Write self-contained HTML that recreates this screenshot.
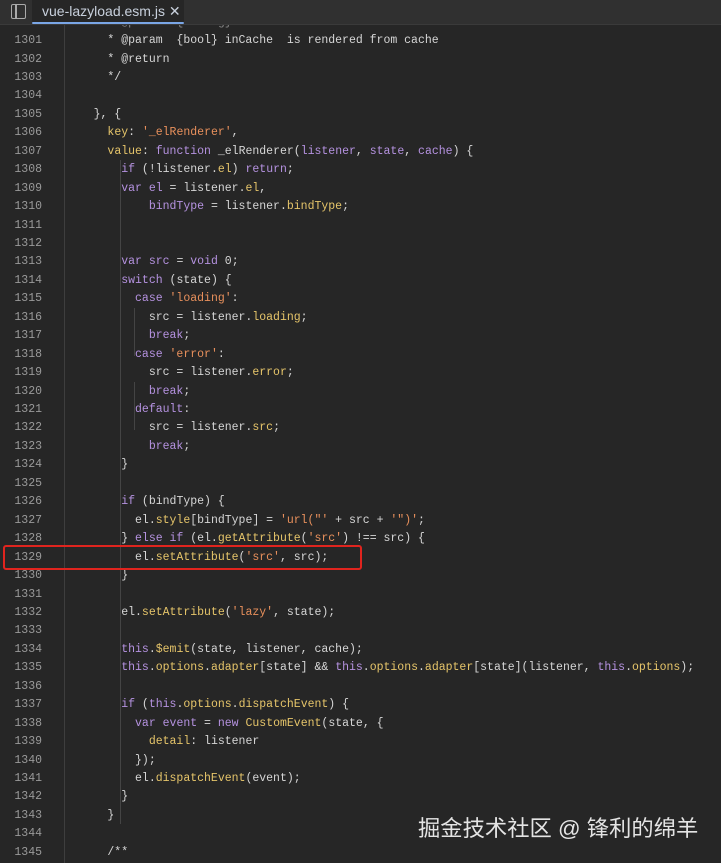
<!DOCTYPE html>
<html><head><meta charset="utf-8"><style>
body{margin:0;width:721px;height:863px;background:#262626;overflow:hidden;position:relative;font-family:"Liberation Mono",monospace}
.tabbar{position:absolute;left:0;top:0;width:721px;height:24px;background:#303030;border-bottom:1px solid #3a3a3a;z-index:5}
.tab{position:absolute;left:32px;top:0;height:24px;width:152px;background:#262626}
.tab span{position:absolute;left:10px;top:3px;font:14px "Liberation Sans",sans-serif;color:#c8d0dc;white-space:nowrap}
.tab i{position:absolute;left:0;right:0;bottom:0;height:2px;background:#7aa6e6;border-radius:2px}
.gut{position:absolute;left:0;top:24px;width:64px;height:839px;border-right:1px solid #3e3e3e}
.ln{position:absolute;left:0;width:42px;text-align:right;font-size:11.5px;color:#9a9a9a;height:18px;line-height:18px}
.cd{position:absolute;left:66px;font-size:11.5px;color:#d6d6d6;white-space:pre;height:18px;line-height:18px}
.k{color:#b592e0}.s{color:#e8905c}.p{color:#e6c56a}
.g{position:absolute;width:1px;background:#444}
.box{position:absolute;left:3px;top:545px;width:355px;height:21px;border:2px solid #e0241e;border-radius:3px}
.wm{position:absolute;left:418px;top:811px;font:22.3px "Liberation Sans","Noto Sans CJK SC",sans-serif;color:#e4e4e4;white-space:nowrap}
</style></head><body>
<div class="tabbar"><div style="position:absolute;left:11px;top:4px;width:13px;height:13px;border:1.5px solid #aaa;border-radius:2px"><div style="position:absolute;left:3px;top:0;width:1.5px;height:13px;background:#aaa"></div></div>
<div class="tab"><span>vue-lazyload.esm.js ✕</span><i></i></div></div>
<div class="gut"></div>
<div class="g" style="left:120px;top:160px;height:664px"></div>
<div class="g" style="left:134px;top:308px;height:48px"></div>
<div class="g" style="left:134px;top:382px;height:48px"></div>
<div id="c"></div>
<div class="box"></div>
<div class="wm">掘金技术社区 @ 锋利的绵羊</div>
<script>
var L=[
['      * @param  {bool} inCache  is rendered from cache'],
['      * @return'],
['      */'],
[''],
['    }, {'],
['      <span class="p">key</span>: <span class="s">\'_elRenderer\'</span>,'],
['      <span class="p">value</span>: <span class="k">function</span> _elRenderer(<span class="k">listener</span>, <span class="k">state</span>, <span class="k">cache</span>) {'],
['        <span class="k">if</span> (!listener.<span class="p">el</span>) <span class="k">return</span>;'],
['        <span class="k">var</span> <span class="k">el</span> = listener.<span class="p">el</span>,'],
['            <span class="k">bindType</span> = listener.<span class="p">bindType</span>;'],
[''],[''],
['        <span class="k">var</span> <span class="k">src</span> = <span class="k">void</span> 0;'],
['        <span class="k">switch</span> (state) {'],
['          <span class="k">case</span> <span class="s">\'loading\'</span>:'],
['            src = listener.<span class="p">loading</span>;'],
['            <span class="k">break</span>;'],
['          <span class="k">case</span> <span class="s">\'error\'</span>:'],
['            src = listener.<span class="p">error</span>;'],
['            <span class="k">break</span>;'],
['          <span class="k">default</span>:'],
['            src = listener.<span class="p">src</span>;'],
['            <span class="k">break</span>;'],
['        }'],
[''],
['        <span class="k">if</span> (bindType) {'],
['          el.<span class="p">style</span>[bindType] = <span class="s">\'url("\'</span> + src + <span class="s">\'")\'</span>;'],
['        } <span class="k">else if</span> (el.<span class="p">getAttribute</span>(<span class="s">\'src\'</span>) !== src) {'],
['          el.<span class="p">setAttribute</span>(<span class="s">\'src\'</span>, src);'],
['        }'],
[''],
['        el.<span class="p">setAttribute</span>(<span class="s">\'lazy\'</span>, state);'],
[''],
['        <span class="k">this</span>.<span class="p">$emit</span>(state, listener, cache);'],
['        <span class="k">this</span>.<span class="p">options</span>.<span class="p">adapter</span>[state] &amp;&amp; <span class="k">this</span>.<span class="p">options</span>.<span class="p">adapter</span>[state](listener, <span class="k">this</span>.<span class="p">options</span>);'],
[''],
['        <span class="k">if</span> (<span class="k">this</span>.<span class="p">options</span>.<span class="p">dispatchEvent</span>) {'],
['          <span class="k">var</span> <span class="k">event</span> = <span class="k">new</span> <span class="p">CustomEvent</span>(state, {'],
['            <span class="p">detail</span>: listener'],
['          });'],
['          el.<span class="p">dispatchEvent</span>(event);'],
['        }'],
['      }'],
[''],
['      /**']
];
var h='<div class="cd" style="top:14px;color:#888">      * @param  {string} state  will be rendered</div><div class="ln" style="top:14px">1300</div>';
for(var i=0;i<L.length;i++){var t=(32+i*18.45).toFixed(1);
h+='<div class="ln" style="top:'+t+'px">'+(1301+i)+'</div><div class="cd" style="top:'+t+'px">'+L[i][0]+'</div>';}
document.getElementById('c').innerHTML=h;
</script>
</body></html>
